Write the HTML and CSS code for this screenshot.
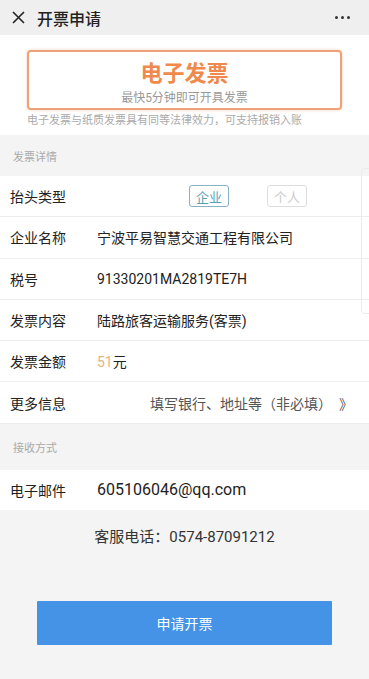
FILE: index.html
```html
<!DOCTYPE html>
<html>

<head>
    <meta charset="utf-8">
    <title>开票申请</title>
    <link rel="stylesheet" href="styles.css">
</head>

<body>
    <div class="topbar">
        <svg class="close" width="13" height="13" viewBox="0 0 13 13">
            <path d="M1 1 L12 12 M12 1 L1 12" stroke="#222" stroke-width="1.6" fill="none" />
        </svg>
        <span class="title">开票申请</span>
        <span class="more"><i></i><i></i><i></i></span>
    </div>

    <div class="intro">
        <div class="type-card">
            <strong>电子发票</strong>
            <span>最快5分钟即可开具发票</span>
        </div>
        <p class="note">电子发票与纸质发票具有同等法律效力，可支持报销入账</p>
    </div>

    <div class="section-title">发票详情</div>
    <div class="rows">
        <div class="row">
            <span class="label">抬头类型</span>
            <div class="switch">
                <span class="opt active">企业</span>
                <span class="opt">个人</span>
            </div>
        </div>
        <div class="row">
            <span class="label">企业名称</span>
            <span class="value">宁波平易智慧交通工程有限公司</span>
        </div>
        <div class="row">
            <span class="label">税号</span>
            <span class="value">91330201MA2819TE7H</span>
        </div>
        <div class="row">
            <span class="label">发票内容</span>
            <span class="value">陆路旅客运输服务(客票)</span>
        </div>
        <div class="row">
            <span class="label">发票金额</span>
            <span class="value"><em class="amount">51</em>元</span>
        </div>
        <div class="row">
            <span class="label">更多信息</span>
            <span class="extra">填写银行、地址等（非必填）<b>》</b></span>
        </div>
        <div class="edge"></div>
    </div>

    <div class="section-title tall">接收方式</div>
    <div class="row mail">
        <span class="label">电子邮件</span>
        <span class="value email">605106046@qq.com</span>
    </div>

    <p class="hotline">客服电话：0574-87091212</p>

    <div class="actions">
        <button class="submit">申请开票</button>
    </div>
</body>

</html>
```

FILE: styles.css
```css
body {
    margin: 0;
    background-color: #f4f4f4;
    font-family: Roboto, "Noto Sans CJK SC", sans-serif;
    color: #222;
}

.topbar {
    height: 35px;
    background-color: #efefef;
    display: flex;
    align-items: center;
    padding: 0 12px;
    box-sizing: border-box;
}
.topbar .close {
    margin-right: 12px;
}
.topbar .title {
    font-size: 16px;
    font-weight: 500;
    flex: 1;
}
.topbar .more {
    display: flex;
    gap: 3px;
    margin-right: 7px;
}
.topbar .more i {
    width: 3px;
    height: 3px;
    border-radius: 50%;
    background-color: #333;
}

.intro {
    background-color: #fff;
    padding: 15px 27px 7px;
}
.type-card {
    height: 60px;
    box-sizing: border-box;
    border: 2px solid #eea27a;
    border-radius: 4px;
    box-shadow: 0 0 3px rgba(238, 162, 122, 0.5);
    display: flex;
    flex-direction: column;
    align-items: center;
    padding-top: 9px;
}
.type-card strong {
    color: #ef8a4c;
    font-size: 22px;
    line-height: 26px;
    font-weight: 700;
}
.type-card span {
    margin-top: 3px;
    color: #999;
    font-size: 12px;
    line-height: 16px;
}
.note {
    margin: 3px 0 0;
    font-size: 11px;
    line-height: 15px;
    color: #aaa;
}

.section-title {
    height: 41px;
    padding-left: 13px;
    display: flex;
    align-items: center;
    font-size: 11px;
    color: #aaa;
}
.section-title.tall {
    height: 46px;
}

.rows {
    position: relative;
}
.row {
    height: 41.3px;
    box-sizing: border-box;
    background-color: #fff;
    border-bottom: 1px solid #eee;
    display: flex;
    align-items: center;
    padding: 0 16px 0 10px;
    font-size: 14px;
}
.row:last-of-type {
    border-bottom: none;
}
.row .label {
    width: 87px;
    flex-shrink: 0;
}
.row .value {
    color: #222;
}
.row .amount {
    font-style: normal;
    color: #e8b37e;
}
.row .extra {
    flex: 1;
    text-align: right;
    color: #555;
}
.row .extra b {
    font-weight: normal;
    margin-left: 14px;
}
.row.mail {
    height: 40px;
    border-bottom: none;
}
.row .email {
    font-size: 16px;
}

.switch {
    display: flex;
    gap: 38px;
    margin-left: 92px;
}
.switch .opt {
    width: 40px;
    height: 22px;
    box-sizing: border-box;
    border: 1px solid #ddd;
    border-radius: 3px;
    color: #ccc;
    font-size: 13px;
    display: flex;
    align-items: center;
    justify-content: center;
}
.switch .opt.active {
    border-color: #86b4c4;
    color: #5c9fb5;
}

.edge {
    position: absolute;
    left: 361px;
    top: -8px;
    width: 12px;
    height: 144px;
    border: 1px solid #ececec;
    border-radius: 4px;
}

.hotline {
    margin: 15px 0 0;
    text-align: center;
    font-size: 15px;
    line-height: 24px;
    color: #333;
}

.actions {
    padding: 52px 37px 0;
}
.submit {
    width: 100%;
    height: 44px;
    border: none;
    border-radius: 1px;
    background-color: #4493e6;
    color: #fff;
    font-size: 14px;
    font-family: Roboto, "Noto Sans CJK SC", sans-serif;
}
```
